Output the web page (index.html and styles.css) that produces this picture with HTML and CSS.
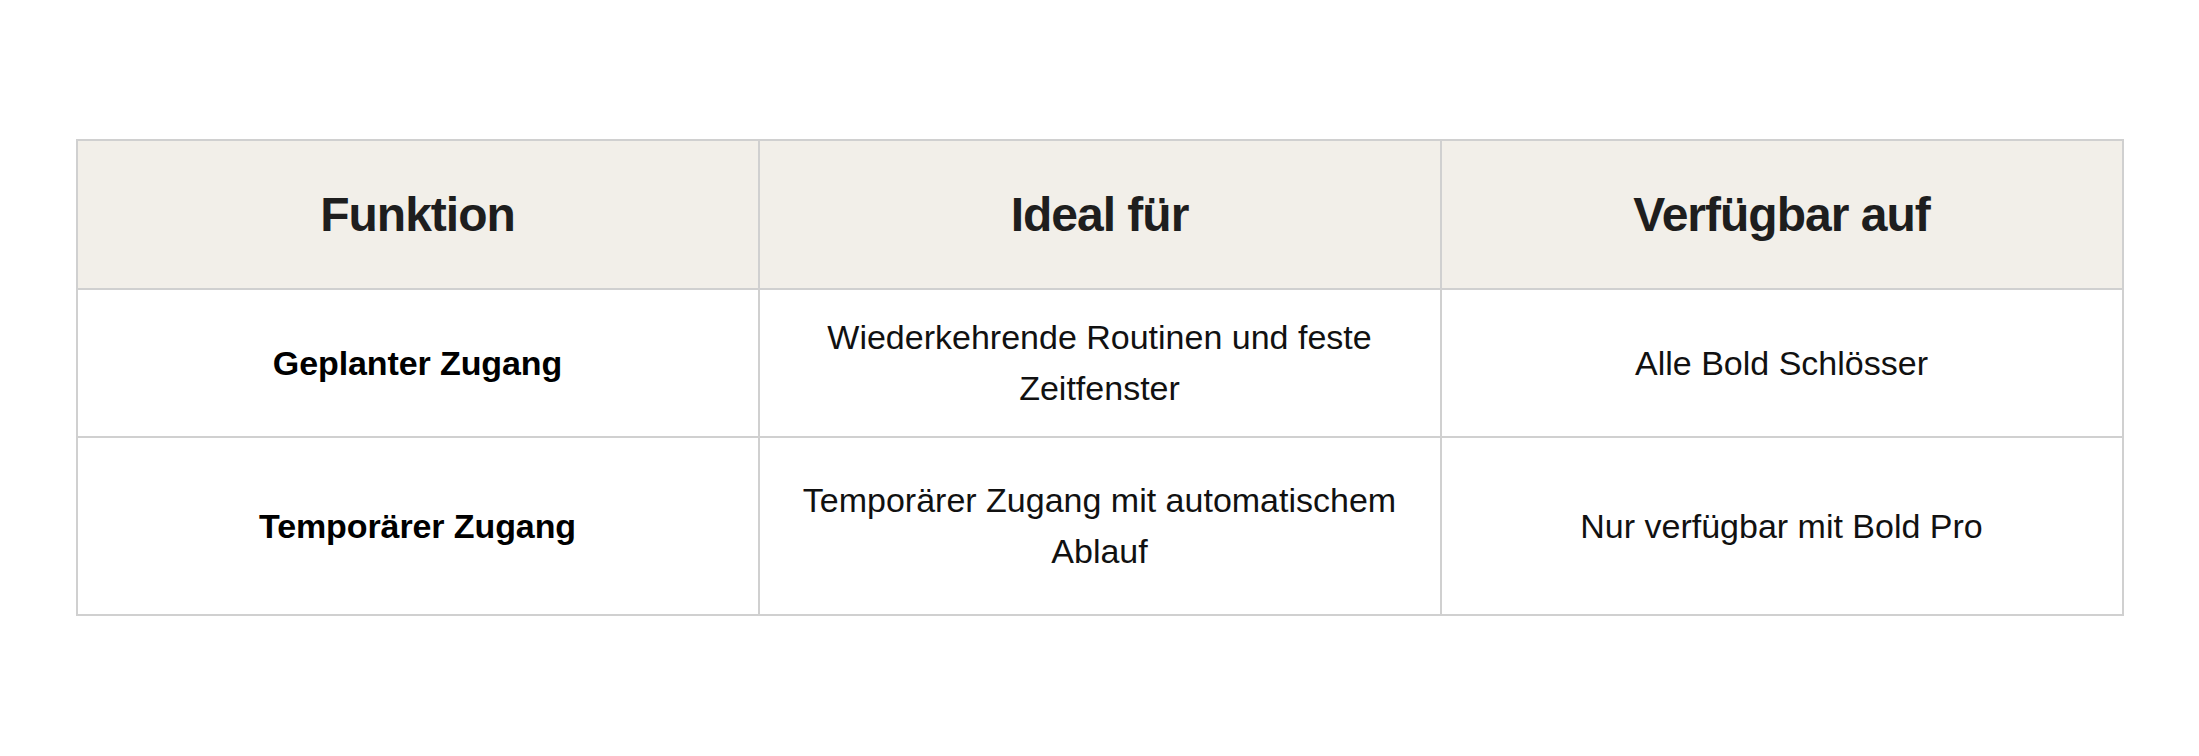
FILE: index.html
```html
<!DOCTYPE html>
<html lang="de">
<head>
<meta charset="utf-8">
<title>Funktionsvergleich</title>
<link rel="stylesheet" href="styles.css">
</head>
<body>
<main class="page">
  <div class="table" role="table">
    <div class="cell head" role="columnheader">Funktion</div>
    <div class="cell head" role="columnheader">Ideal für</div>
    <div class="cell head" role="columnheader">Verfügbar auf</div>

    <div class="cell name" role="cell">Geplanter Zugang</div>
    <div class="cell" role="cell">Wiederkehrende Routinen und feste Zeitfenster</div>
    <div class="cell" role="cell">Alle Bold Schlösser</div>

    <div class="cell name" role="cell">Temporärer Zugang</div>
    <div class="cell" role="cell">Temporärer Zugang mit automatischem Ablauf</div>
    <div class="cell" role="cell">Nur verfügbar mit Bold Pro</div>
  </div>
</main>
</body>
</html>
```
FILE: styles.css
```css
html, body {
  margin: 0;
  padding: 0;
  background: #ffffff;
}

.page {
  padding-top: 139px;
  display: flex;
  justify-content: center;
  font-family: "Liberation Sans", Arial, sans-serif;
}

.table {
  width: 2046px;
  display: grid;
  grid-template-columns: repeat(3, 1fr);
  grid-template-rows: 149px 148px 178px;
  border-top: 2px solid #d0d0d0;
  border-left: 2px solid #d0d0d0;
}

.cell {
  display: flex;
  align-items: center;
  justify-content: center;
  text-align: center;
  padding: 0 40px;
  border-right: 2px solid #d0d0d0;
  border-bottom: 2px solid #d0d0d0;
  font-size: 34px;
  line-height: 51px;
  letter-spacing: 0;
  color: #111111;
}

.head {
  background: #f2efe9;
  font-size: 48px;
  font-weight: 700;
  letter-spacing: -1px;
  color: #1e1e1e;
}

.name {
  font-size: 34px;
  font-weight: 700;
  letter-spacing: -0.1px;
  color: #000000;
}
```
